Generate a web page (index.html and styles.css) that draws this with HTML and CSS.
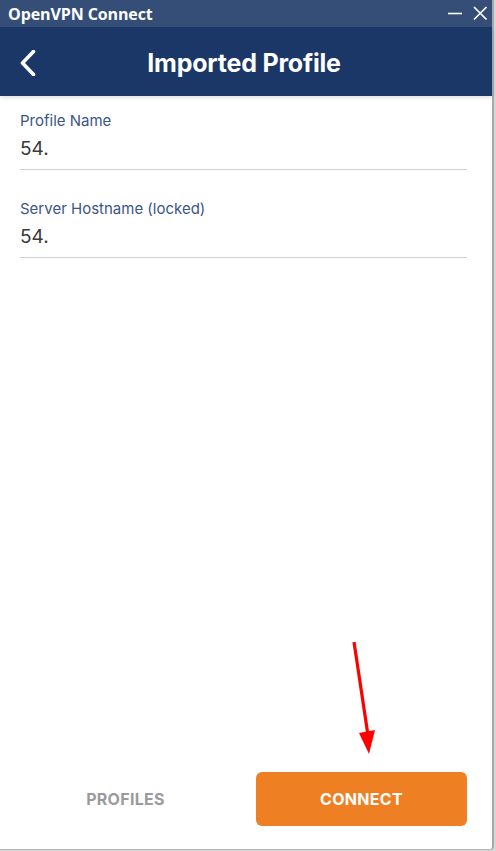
FILE: index.html
```html
<!DOCTYPE html>
<html>
<head>
<meta charset="utf-8">
<link rel="stylesheet" href="styles.css">
</head>
<body>
<div class="window">
  <div class="titlebar">
    <span class="app-name">OpenVPN Connect</span>
    <div class="controls">
      <svg class="ctl" width="16" height="16" viewBox="0 0 16 16"><line x1="1" y1="8.5" x2="15" y2="8.5" stroke="#fff" stroke-width="1.6"/></svg>
      <svg class="ctl" width="16" height="16" viewBox="0 0 16 16"><path d="M2 2 L14.5 14.5 M14.5 2 L2 14.5" stroke="#fff" stroke-width="1.7" fill="none"/></svg>
    </div>
  </div>
  <div class="header">
    <svg class="back" width="16" height="26" viewBox="0 0 16 26"><path d="M13.5 1.5 L2.5 13 L13.5 24.5" stroke="#fff" stroke-width="3.6" fill="none" stroke-linecap="round" stroke-linejoin="round"/></svg>
    <h1 class="title">Imported Profile</h1>
  </div>
  <div class="content">
    <div class="field">
      <div class="label">Profile Name</div>
      <div class="value">54.</div>
    </div>
    <div class="field">
      <div class="label">Server Hostname (locked)</div>
      <div class="value">54.</div>
    </div>
  </div>
  <div class="footer">
    <button class="btn btn-text">PROFILES</button>
    <button class="btn btn-primary">CONNECT</button>
  </div>
  <svg class="arrow" width="40" height="120" viewBox="0 0 40 120"><line x1="14" y1="6" x2="27.5" y2="96" stroke="#ff0000" stroke-width="3.2"/><polygon points="19,97 35,94 29,118" fill="#ff0000"/></svg>
</div>
</body>
</html>
```

FILE: styles.css
```css
html, body {
  margin: 0;
  padding: 0;
}
body {
  background: #d6d6d6;
  width: 496px;
  height: 851px;
  overflow: hidden;
}
.window {
  position: relative;
  width: 494px;
  height: 850px;
  background: #ffffff;
  border-right: 2px solid #a9a9a9;
  border-bottom: 1px solid #b5b5b5;
  border-bottom-right-radius: 4px;
  box-sizing: border-box;
  display: flex;
  flex-direction: column;
  font-family: Inter, "Noto Sans", sans-serif;
}
.titlebar {
  height: 27px;
  background: #344e77;
  display: flex;
  align-items: center;
  justify-content: space-between;
  padding: 0 4px 0 8px;
  flex-shrink: 0;
}
.app-name {
  color: #ffffff;
  font-family: "Open Sans", "DejaVu Sans", sans-serif;
  font-weight: 700;
  font-size: 16px;
  letter-spacing: -0.1px;
}
.controls {
  display: flex;
  align-items: center;
  gap: 9px;
  margin-top: -1px;
}
.ctl {
  display: block;
}
.header {
  height: 69px;
  background: #1b3767;
  position: relative;
  display: flex;
  align-items: center;
  justify-content: center;
  padding-right: 4px;
  flex-shrink: 0;
  box-shadow: 0 2px 4px rgba(0, 0, 0, 0.12);
  z-index: 1;
}
.back {
  position: absolute;
  left: 20px;
  top: 23px;
}
.title {
  margin: 0;
  color: #ffffff;
  font-size: 25px;
  font-weight: 700;
  letter-spacing: -0.2px;
  margin-top: 2px;
}
.content {
  flex: 1;
  padding: 16px 25px 0 20px;
}
.field {
  border-bottom: 1px solid #cfcfcf;
  padding-bottom: 8px;
  margin-bottom: 30px;
}
.label {
  color: #3b5586;
  font-size: 15px;
  line-height: 18px;
}
.value {
  margin-top: 7px;
  color: #3a3a3a;
  font-size: 19px;
  line-height: 24px;
}
.footer {
  display: flex;
  gap: 25px;
  padding: 0 25px 23px 20px;
  flex-shrink: 0;
}
.btn {
  flex: 1;
  height: 54px;
  border: none;
  border-radius: 6px;
  font-family: Inter, "Noto Sans", sans-serif;
  font-size: 16px;
  font-weight: 700;
  letter-spacing: 0.3px;
  padding: 0;
}
.btn-text {
  background: transparent;
  color: #9b9b9b;
}
.btn-primary {
  background: #ee8023;
  color: #ffffff;
}
.arrow {
  position: absolute;
  left: 340px;
  top: 636px;
}
```
